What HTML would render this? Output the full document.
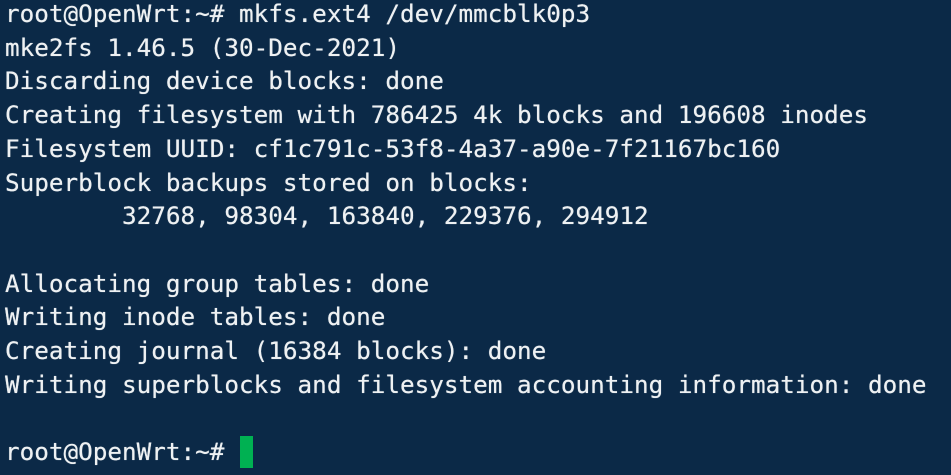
<!DOCTYPE html>
<html><head><meta charset="utf-8"><style>
html,body{margin:0;padding:0;width:951px;height:475px;overflow:hidden;background:#0b2947;}
pre{margin:0;position:absolute;left:5px;top:-3px;font-family:"DejaVu Sans Mono","Liberation Mono",monospace;font-size:24.3px;line-height:33.7px;color:#eef1f3;text-shadow:0 0 0.6px #eef1f3;}
.cur{position:absolute;left:240px;top:436px;width:13px;height:32px;background:#00b152;}
</style></head><body>
<pre>root@OpenWrt:~# mkfs.ext4 /dev/mmcblk0p3
mke2fs 1.46.5 (30-Dec-2021)
Discarding device blocks: done
Creating filesystem with 786425 4k blocks and 196608 inodes
Filesystem UUID: cf1c791c-53f8-4a37-a90e-7f21167bc160
Superblock backups stored on blocks:
        32768, 98304, 163840, 229376, 294912

Allocating group tables: done
Writing inode tables: done
Creating journal (16384 blocks): done
Writing superblocks and filesystem accounting information: done

root@OpenWrt:~# </pre>
<div class="cur"></div>
</body></html>
